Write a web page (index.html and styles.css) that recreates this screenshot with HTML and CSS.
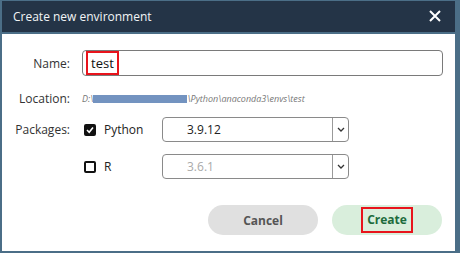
FILE: index.html
```html
<html>
<head>
	<meta charset="utf-8" />
	<link rel="stylesheet" href="styles.css">
</head>
<body>
	<div class="dialog">
		<div class="titlebar">
			<span class="title">Create new environment</span>
			<svg class="close" width="12" height="12" viewBox="0 0 12 12">
				<path d="M1 1 L11 11 M11 1 L1 11" stroke="#fff" stroke-width="2" />
			</svg>
		</div>
		<div class="content">
			<div class="row name-row">
				<span class="label">Name:</span>
				<div class="text-input"><span class="mark">test</span></div>
			</div>
			<div class="row location-row">
				<span class="label">Location:</span>
				<span class="path">D:\<span class="hidden-part"></span>\Python\anaconda3\envs\test</span>
			</div>
			<div class="row pkg-row python-row">
				<span class="label">Packages:</span>
				<div class="pkg">
					<span class="check checked">
						<svg width="8" height="8" viewBox="0 0 8 8"><path d="M1 4 L3.2 6.2 L7 1.6" stroke="#fff" stroke-width="1.6" fill="none" /></svg>
					</span>
					<span class="pkg-name">Python</span>
				</div>
				<div class="select">
					<span class="value">3.9.12</span>
					<span class="arrow"><svg width="8" height="5" viewBox="0 0 8 5"><path d="M1 1 L4 4 L7 1" stroke="#333" stroke-width="1.3" fill="none" /></svg></span>
				</div>
			</div>
			<div class="row pkg-row r-row">
				<span class="label"></span>
				<div class="pkg">
					<span class="check"></span>
					<span class="pkg-name">R</span>
				</div>
				<div class="select disabled">
					<span class="value">3.6.1</span>
					<span class="arrow"><svg width="8" height="5" viewBox="0 0 8 5"><path d="M1 1 L4 4 L7 1" stroke="#333" stroke-width="1.3" fill="none" /></svg></span>
				</div>
			</div>
			<div class="footer">
				<span class="button cancel">Cancel</span>
				<span class="button create"><span class="mark">Create</span></span>
			</div>
		</div>
	</div>
</body>
</html>
```

FILE: styles.css
```css
body {
	margin: 0;
	padding: 0;
	font-family: "Open Sans", "Noto Sans", sans-serif;
	background: #fff;
}
.dialog {
	box-sizing: border-box;
	width: 460px;
	height: 253px;
	border-style: solid;
	border-color: #4b6e87;
	border-width: 1px 5px 2px 2px;
	background: #fff;
}
.titlebar {
	height: 31px;
	background: #243447;
	border-bottom: 2px solid #4b6e87;
	display: flex;
	align-items: center;
	justify-content: space-between;
	padding: 0 14px 0 11px;
}
.title {
	color: #f2f4f6;
	font-size: 12px;
}
.close {
	margin-top: -1px;
}
.content {
	padding-right: 12px;
}
.row {
	display: flex;
	align-items: center;
}
.label {
	box-sizing: border-box;
	width: 80px;
	padding-right: 12px;
	text-align: right;
	font-size: 12px;
	color: #333;
}
.name-row {
	margin-top: 16px;
	height: 26px;
}
.text-input {
	box-sizing: border-box;
	width: 361px;
	height: 26px;
	border: 1px solid #7a7a7a;
	border-radius: 4px;
	display: flex;
	align-items: center;
	padding-left: 3px;
}
.mark {
	border: 2px solid #e8141c;
	padding: 2px 3px;
	font-size: 13px;
	color: #111;
	line-height: 16px;
}
.location-row {
	margin-top: 10px;
	height: 24px;
}
.path {
	font-size: 9px;
	font-style: italic;
	color: #777;
}
.hidden-part {
	display: inline-block;
	width: 94px;
	height: 8px;
	background: #7393c0;
	vertical-align: -1px;
}
.python-row {
	margin-top: 7px;
	height: 25px;
}
.r-row {
	margin-top: 12px;
	height: 25px;
}
.pkg {
	width: 80px;
	display: flex;
	align-items: center;
}
.check {
	box-sizing: border-box;
	width: 12px;
	height: 12px;
	margin-left: 2px;
	margin-right: 8px;
	border: 2px solid #111;
	border-radius: 2px;
	background: #fff;
	display: flex;
	align-items: center;
	justify-content: center;
}
.check.checked {
	background: #111;
}
.pkg-name {
	font-size: 12px;
	color: #222;
}
.select {
	box-sizing: border-box;
	width: 187px;
	height: 25px;
	border: 1px solid #8a8a8a;
	border-radius: 4px;
	display: flex;
	align-items: center;
}
.select .value {
	flex: 1;
	padding-left: 24px;
	font-size: 12px;
	color: #222;
}
.select.disabled .value {
	color: #aaa;
}
.select .arrow {
	width: 15px;
	height: 100%;
	border-left: 1px solid #9a9a9a;
	display: flex;
	align-items: center;
	justify-content: center;
}
.footer {
	margin-top: 26px;
	display: flex;
	justify-content: flex-end;
	gap: 14px;
	padding-right: 1px;
}
.button {
	width: 110px;
	height: 30px;
	border-radius: 15px;
	display: flex;
	align-items: center;
	justify-content: center;
	font-size: 12px;
	font-weight: bold;
	user-select: none;
}
.cancel {
	background: #e0e0e0;
	color: #555;
}
.create {
	background: #d9eedc;
}
.create .mark {
	font-size: 12px;
	color: #1d6b3c;
	padding: 3px 4px;
}
```
